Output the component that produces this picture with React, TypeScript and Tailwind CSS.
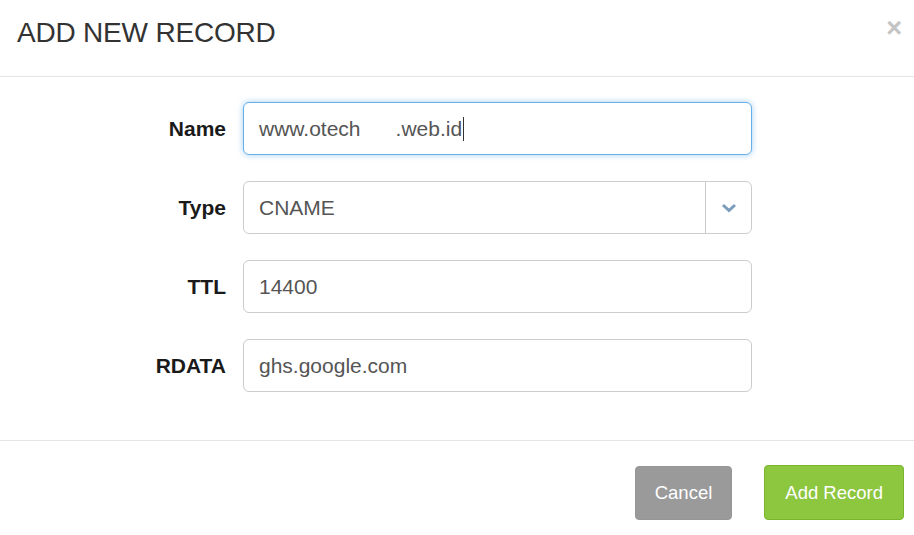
export default function App() {
  const rows = [
    { label: 'Name', value: 'www.otech      .web.id', focus: true },
    { label: 'Type', value: 'CNAME', select: true },
    { label: 'TTL', value: '14400' },
    { label: 'RDATA', value: 'ghs.google.com' },
  ]

  return (
    <div className="w-[914px] h-[535px] bg-white overflow-hidden font-['Liberation_Sans',Arial,sans-serif]">
      {/* Header */}
      <div className="relative h-[77px] border-b border-[#e5e5e5] pl-[17px] pt-[19px]">
        <h1 className="text-[28px] leading-none text-[#333] tracking-[-0.2px]">ADD NEW RECORD</h1>
        <button className="absolute right-[12px] top-[15px] text-[27px] font-bold leading-none text-[#c4c4c4]">×</button>
      </div>

      {/* Body */}
      <div className="flex flex-col gap-[26px] pt-[25px] pb-[48px]">
        {rows.map((row) => (
          <div key={row.label} className="flex items-center">
            <label className="w-[226px] text-right text-[21px] font-bold text-[#1a1a1a]">{row.label}</label>
            <div
              className={`ml-[17px] w-[509px] h-[53px] flex items-center rounded-[6px] border bg-white ${
                row.focus
                  ? 'border-[#66afe9] shadow-[0_0_6px_rgba(102,175,233,0.6)]'
                  : 'border-[#cccccc]'
              }`}
            >
              <div className="flex-1 pl-[15px] text-[21px] text-[#555] whitespace-pre flex items-center">
                {row.value}
                {row.focus && <span className="ml-[1px] inline-block w-[1px] h-[24px] bg-[#333]" />}
              </div>
              {row.select && (
                <div className="w-[46px] h-full border-l border-[#cccccc] flex items-center justify-center">
                  <svg width="16" height="10" viewBox="0 0 16 10">
                    <path d="M2 2 L8 7.5 L14 2" fill="none" stroke="#7b9cba" strokeWidth="3" />
                  </svg>
                </div>
              )}
            </div>
          </div>
        ))}
      </div>

      {/* Footer */}
      <div className="border-t border-[#e5e5e5] flex justify-end gap-[32px] pt-[25px] pr-[10px]">
        <button className="h-[54px] px-[19px] rounded-[4px] bg-[#9a9a9a] border border-[#969696] text-white text-[18.5px]">
          Cancel
        </button>
        <button className="h-[55px] -mt-[1px] px-[20px] rounded-[4px] bg-[#8dc63f] border border-[#79b52d] text-white text-[18.5px]">
          Add Record
        </button>
      </div>
    </div>
  )
}
